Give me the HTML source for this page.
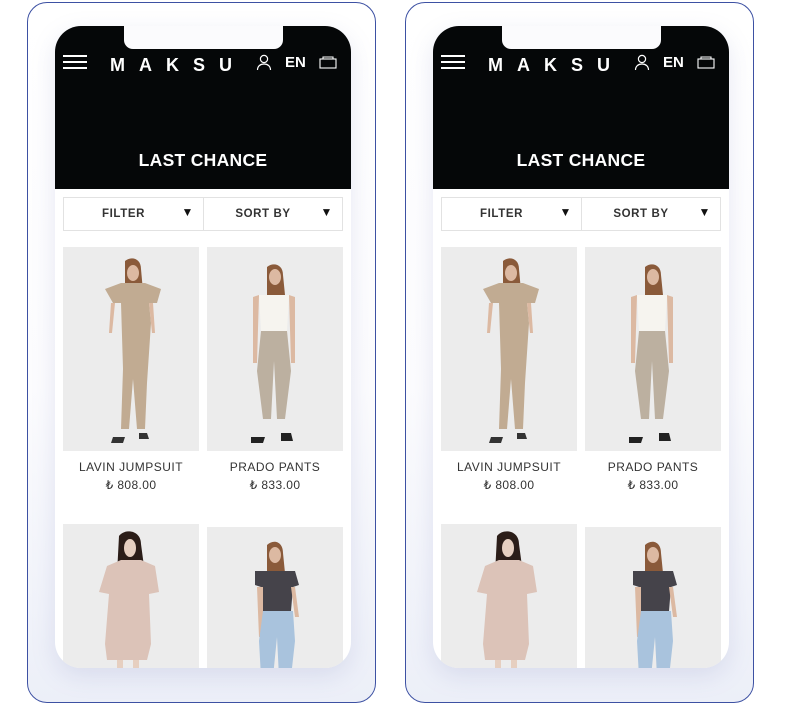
<!DOCTYPE html>
<html><head><meta charset="utf-8"><style>
*{margin:0;padding:0;box-sizing:border-box}
body{width:785px;height:707px;background:#fff;position:relative;overflow:hidden;font-family:"Liberation Sans",Arial,sans-serif}
.card{position:absolute;top:2px;width:349px;height:701px;border:1.5px solid #3d51a3;border-radius:20px;background:linear-gradient(180deg,#fff 0%,#fcfcfe 55%,#eceff8 100%)}
.screen{position:absolute;left:27px;top:23px;width:296px;height:642px;border-radius:26px;background:#fff;overflow:hidden;box-shadow:0 8px 24px rgba(120,130,190,.18)}
.hdr{position:absolute;left:0;top:0;width:296px;height:163px;background:#050708}
.notch{position:absolute;left:69px;top:-4px;width:159px;height:27px;background:#fbfbfd;border-radius:0 0 9px 9px}
.ham{position:absolute;left:8px;top:29px;width:24px;height:14px}
.ham i{display:block;height:2px;background:#fff;margin-bottom:4px}
.logo{position:absolute;left:55px;top:29px;color:#fff;font-weight:bold;font-size:18px;letter-spacing:14px}
.en{position:absolute;left:230px;top:28px;color:#fff;font-weight:bold;font-size:15px}
.title{position:absolute;left:0;width:296px;top:124px;text-align:center;color:#fff;font-weight:bold;font-size:17.5px;letter-spacing:.3px}
.fb{position:absolute;top:171px;height:34px;border:1px solid #e2e2e2;font-size:11.5px;font-weight:bold;color:#333;letter-spacing:.6px}
.fb span{position:absolute;top:10px;width:100%;text-align:center;left:-10px}
.fb b{position:absolute;right:9px;top:7px;font-size:12px;color:#111}
.img{position:absolute;width:136px;background:#ececec}
.nm{position:absolute;width:136px;text-align:center;font-size:12px;color:#333;letter-spacing:.5px}
.pr{position:absolute;width:136px;text-align:center;font-size:12px;color:#333;letter-spacing:.4px}
</style></head><body>

<div class="card" style="left:27px">
<div class="screen">
 <div class="hdr">
  <div class="notch"></div>
  <div class="ham"><i></i><i></i><i></i></div>
  <div class="logo">MAKSU</div>
  <svg style="position:absolute;left:201px;top:28px" width="16" height="17" viewBox="0 0 16 17"><circle cx="8" cy="5" r="3.6" fill="none" stroke="#fff" stroke-width="1.2"/><path d="M1.5 16c0-4 3-6 6.5-6s6.5 2 6.5 6" fill="none" stroke="#fff" stroke-width="1.2"/></svg>
  <div class="en">EN</div>
  <svg style="position:absolute;left:264px;top:30px" width="18" height="13" viewBox="0 0 18 13"><rect x="1" y="3" width="16" height="9" fill="none" stroke="#fff" stroke-width="1.1"/><path d="M4 3V1h10v2" fill="none" stroke="#fff" stroke-width="1.1"/></svg>
  <div class="title">LAST CHANCE</div>
 </div>
 <div class="fb" style="left:8px;width:141px"><span>FILTER</span><b>▼</b></div>
 <div class="fb" style="left:148px;width:140px"><span>SORT BY</span><b>▼</b></div>
 <svg class="img" style="left:8px;top:221px" width="136" height="204" viewBox="0 0 136 204"><rect width="136" height="204" fill="#ececec"/>
  <path d="M62 14c6-5 16-3 16 8l2 22-18 0z" fill="#8a5a3a"/><ellipse cx="70" cy="26" rx="6" ry="8" fill="#dcb9a2"/>
  <path d="M42 42l16-6h24l16 6-4 14-8 0 2 20-4 60-2 46h-8l-4-50-4 50h-8l2-60-2-66-8 0z" fill="#c1ab92"/>
  <path d="M48 56l-2 30 3 0 3-30zM90 56l2 30-3 0-3-30z" fill="#dcb9a2"/>
  <path d="M50 190l12 0-2 6-12 0zM76 186l8 0 2 6-10 0z" fill="#333"/></svg>
 <svg class="img" style="left:152px;top:221px" width="136" height="204" viewBox="0 0 136 204"><rect width="136" height="204" fill="#ececec"/>
  <path d="M60 20c6-5 16-3 16 8l2 20-18 0z" fill="#8a5a3a"/><ellipse cx="68" cy="30" rx="6" ry="8" fill="#dcb9a2"/>
  <path d="M52 48h30l-2 36h-26z" fill="#f6f4ef"/><path d="M46 50l6-2-2 68-4 0zM88 50l-6-2 2 68 4 0z" fill="#dcb9a2"/>
  <path d="M54 84h26l4 40-6 48h-8l-3-58-3 58h-8l-6-48z" fill="#bcb0a0"/>
  <path d="M44 190l14 0-2 6-12 0zM74 186l10 0 2 8-12 0z" fill="#222"/></svg>
 <div class="nm" style="left:8px;top:434px">LAVIN JUMPSUIT</div>
 <div class="pr" style="left:8px;top:452px">₺ 808.00</div>
 <div class="nm" style="left:152px;top:434px">PRADO PANTS</div>
 <div class="pr" style="left:152px;top:452px">₺ 833.00</div>
 <svg class="img" style="left:8px;top:498px" width="136" height="150" viewBox="0 0 136 150"><rect width="136" height="150" fill="#ececec"/>
  <path d="M56 12c6-8 22-6 22 8l4 30-28 0z" fill="#2b1d18"/><ellipse cx="67" cy="24" rx="6" ry="9" fill="#e6cfc0"/>
  <path d="M44 42l14-6h20l14 6 4 26-10 2 2 50-4 16h-40l-2-16 4-50-10-2z" fill="#dcc3b8"/>
  <path d="M54 136l6 0 0 14-6 0zM70 136l6 0 0 14-6 0z" fill="#e6cfc0"/></svg>
 <svg class="img" style="left:152px;top:501px" width="136" height="150" viewBox="0 0 136 150"><rect width="136" height="150" fill="#ececec"/>
  <path d="M60 18c6-6 16-4 16 8l2 20-18 0z" fill="#8a5a3a"/><ellipse cx="68" cy="28" rx="6" ry="8" fill="#dcb9a2"/>
  <path d="M48 44h40l4 14-6 2-2 24h-28l-2-24-6-2z" fill="#45434a"/>
  <path d="M50 60l2 50 4 0 0-50zM84 60l4 30 4 0-4-30z" fill="#dcb9a2"/>
  <path d="M56 84h30l2 30-4 36h-12l-2-40-4 40h-12l-2-36z" fill="#a9c3dd"/></svg>
</div></div>

<div class="card" style="left:405px">
<div class="screen">
 <div class="hdr">
  <div class="notch"></div>
  <div class="ham"><i></i><i></i><i></i></div>
  <div class="logo">MAKSU</div>
  <svg style="position:absolute;left:201px;top:28px" width="16" height="17" viewBox="0 0 16 17"><circle cx="8" cy="5" r="3.6" fill="none" stroke="#fff" stroke-width="1.2"/><path d="M1.5 16c0-4 3-6 6.5-6s6.5 2 6.5 6" fill="none" stroke="#fff" stroke-width="1.2"/></svg>
  <div class="en">EN</div>
  <svg style="position:absolute;left:264px;top:30px" width="18" height="13" viewBox="0 0 18 13"><rect x="1" y="3" width="16" height="9" fill="none" stroke="#fff" stroke-width="1.1"/><path d="M4 3V1h10v2" fill="none" stroke="#fff" stroke-width="1.1"/></svg>
  <div class="title">LAST CHANCE</div>
 </div>
 <div class="fb" style="left:8px;width:141px"><span>FILTER</span><b>▼</b></div>
 <div class="fb" style="left:148px;width:140px"><span>SORT BY</span><b>▼</b></div>
 <svg class="img" style="left:8px;top:221px" width="136" height="204" viewBox="0 0 136 204"><rect width="136" height="204" fill="#ececec"/>
  <path d="M62 14c6-5 16-3 16 8l2 22-18 0z" fill="#8a5a3a"/><ellipse cx="70" cy="26" rx="6" ry="8" fill="#dcb9a2"/>
  <path d="M42 42l16-6h24l16 6-4 14-8 0 2 20-4 60-2 46h-8l-4-50-4 50h-8l2-60-2-66-8 0z" fill="#c1ab92"/>
  <path d="M48 56l-2 30 3 0 3-30zM90 56l2 30-3 0-3-30z" fill="#dcb9a2"/>
  <path d="M50 190l12 0-2 6-12 0zM76 186l8 0 2 6-10 0z" fill="#333"/></svg>
 <svg class="img" style="left:152px;top:221px" width="136" height="204" viewBox="0 0 136 204"><rect width="136" height="204" fill="#ececec"/>
  <path d="M60 20c6-5 16-3 16 8l2 20-18 0z" fill="#8a5a3a"/><ellipse cx="68" cy="30" rx="6" ry="8" fill="#dcb9a2"/>
  <path d="M52 48h30l-2 36h-26z" fill="#f6f4ef"/><path d="M46 50l6-2-2 68-4 0zM88 50l-6-2 2 68 4 0z" fill="#dcb9a2"/>
  <path d="M54 84h26l4 40-6 48h-8l-3-58-3 58h-8l-6-48z" fill="#bcb0a0"/>
  <path d="M44 190l14 0-2 6-12 0zM74 186l10 0 2 8-12 0z" fill="#222"/></svg>
 <div class="nm" style="left:8px;top:434px">LAVIN JUMPSUIT</div>
 <div class="pr" style="left:8px;top:452px">₺ 808.00</div>
 <div class="nm" style="left:152px;top:434px">PRADO PANTS</div>
 <div class="pr" style="left:152px;top:452px">₺ 833.00</div>
 <svg class="img" style="left:8px;top:498px" width="136" height="150" viewBox="0 0 136 150"><rect width="136" height="150" fill="#ececec"/>
  <path d="M56 12c6-8 22-6 22 8l4 30-28 0z" fill="#2b1d18"/><ellipse cx="67" cy="24" rx="6" ry="9" fill="#e6cfc0"/>
  <path d="M44 42l14-6h20l14 6 4 26-10 2 2 50-4 16h-40l-2-16 4-50-10-2z" fill="#dcc3b8"/>
  <path d="M54 136l6 0 0 14-6 0zM70 136l6 0 0 14-6 0z" fill="#e6cfc0"/></svg>
 <svg class="img" style="left:152px;top:501px" width="136" height="150" viewBox="0 0 136 150"><rect width="136" height="150" fill="#ececec"/>
  <path d="M60 18c6-6 16-4 16 8l2 20-18 0z" fill="#8a5a3a"/><ellipse cx="68" cy="28" rx="6" ry="8" fill="#dcb9a2"/>
  <path d="M48 44h40l4 14-6 2-2 24h-28l-2-24-6-2z" fill="#45434a"/>
  <path d="M50 60l2 50 4 0 0-50zM84 60l4 30 4 0-4-30z" fill="#dcb9a2"/>
  <path d="M56 84h30l2 30-4 36h-12l-2-40-4 40h-12l-2-36z" fill="#a9c3dd"/></svg>
</div></div>
</body></html>
